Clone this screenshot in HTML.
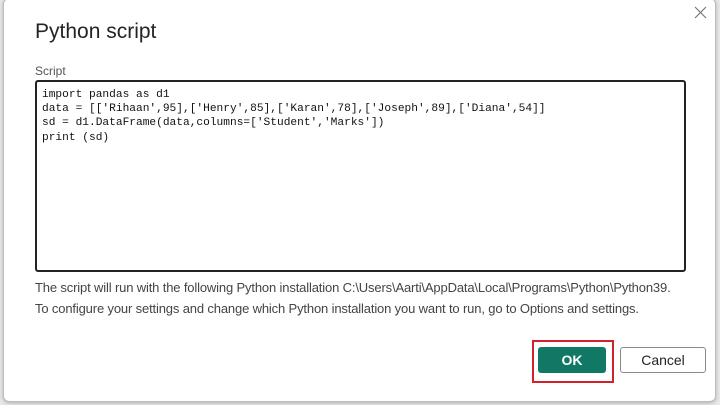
<!DOCTYPE html>
<html><head><style>
body{margin:0;width:720px;height:405px;background:#e9e9e9;position:relative;overflow:hidden;font-family:"Liberation Sans",sans-serif}
.dlg{position:absolute;left:3px;top:-2px;width:711px;height:402px;background:#fff;border:1px solid #bdbdbd;border-radius:6px;box-shadow:0 1px 4px rgba(0,0,0,.25)}
.t{position:absolute;left:35px;top:20px;font-size:21px;color:#252423}
.lab{position:absolute;left:35px;top:64px;font-size:12px;color:#555}
.ta{position:absolute;left:35px;top:80px;width:651px;height:192px;box-sizing:border-box;border:2px solid #222;border-radius:3px;font-family:"Liberation Mono",monospace;font-size:11.2px;line-height:14.2px;padding:6px 0 0 5px;white-space:pre;color:#111}
.p{position:absolute;left:35px;font-size:13px;color:#444;letter-spacing:-0.15px}
.ok{position:absolute;left:538px;top:347px;width:68px;height:26px;background:#117865;border-radius:3px;color:#fff;font-weight:bold;font-size:14px;text-align:center;line-height:26px}
.red{position:absolute;left:532px;top:340px;width:78px;height:39px;border:2px solid #d4202a}
.cn{position:absolute;left:620px;top:347px;width:84px;height:24px;border:1px solid #8a8a8a;border-radius:3px;font-size:14px;text-align:center;line-height:24px;color:#222}
</style></head><body>
<div class="dlg"></div>
<svg style="position:absolute;left:694px;top:6px" width="13" height="13"><path d="M1 1L12 12M12 1L1 12" stroke="#777" stroke-width="1.2"/></svg>
<div class="t">Python script</div>
<div class="lab">Script</div>
<div class="ta">import pandas as d1
data = [['Rihaan',95],['Henry',85],['Karan',78],['Joseph',89],['Diana',54]]
sd = d1.DataFrame(data,columns=['Student','Marks'])
print (sd)</div>
<div class="p" style="top:280px">The script will run with the following Python installation C:\Users\Aarti\AppData\Local\Programs\Python\Python39.</div>
<div class="p" style="top:301px">To configure your settings and change which Python installation you want to run, go to Options and settings.</div>
<div class="red"></div>
<div class="ok">OK</div>
<div class="cn">Cancel</div>
</body></html>
